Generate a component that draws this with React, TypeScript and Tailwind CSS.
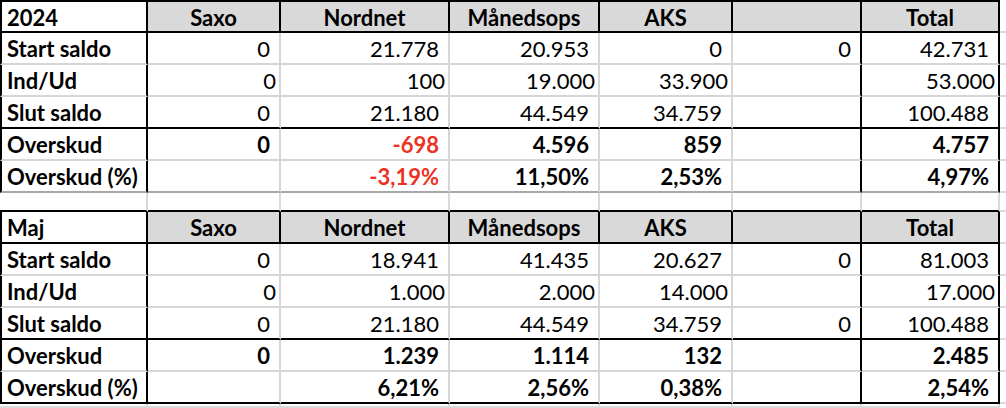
import React from "react";

type Row = {
  label: string;
  values: string[];
  bold?: boolean;
  tight?: boolean;
  red?: number[];
};

type Block = {
  title: string;
  last: "grey" | "black";
  rows: Row[];
};

const heads = ["Saxo", "Nordnet", "Månedsops", "AKS", "", "Total"];

const blocks: Block[] = [
  {
    title: "2024",
    last: "grey",
    rows: [
      { label: "Start saldo", values: ["0", "21.778", "20.953", "0", "0", "42.731"] },
      { label: "Ind/Ud", values: ["0", "100", "19.000", "33.900", "", "53.000"], tight: true },
      { label: "Slut saldo", values: ["0", "21.180", "44.549", "34.759", "", "100.488"] },
      { label: "Overskud", values: ["0", "-698", "4.596", "859", "", "4.757"], bold: true, red: [1] },
      { label: "Overskud (%)", values: ["", "-3,19%", "11,50%", "2,53%", "", "4,97%"], bold: true, red: [1] },
    ],
  },
  {
    title: "Maj",
    last: "black",
    rows: [
      { label: "Start saldo", values: ["0", "18.941", "41.435", "20.627", "0", "81.003"] },
      { label: "Ind/Ud", values: ["0", "1.000", "2.000", "14.000", "", "17.000"], tight: true },
      { label: "Slut saldo", values: ["0", "21.180", "44.549", "34.759", "0", "100.488"] },
      { label: "Overskud", values: ["0", "1.239", "1.114", "132", "", "2.485"], bold: true },
      { label: "Overskud (%)", values: ["", "6,21%", "2,56%", "0,38%", "", "2,54%"], bold: true },
    ],
  },
];

// columns where the vertical line is black in the data rows
const blackRight = [0, 5, 6];

function HeaderRow({ title, first }: { title: string; first: boolean }) {
  const h = first ? "h-[33px] border-t-2" : "h-[32px]";
  return (
    <>
      <div className={`${h} border-l-2 border-r-2 border-b-2 border-black bg-white flex items-center pl-[5px] pt-[2px] font-bold`}>
        {title}
      </div>
      {heads.map((t, i) => (
        <div
          key={i}
          className={`${h} border-r-2 border-b-2 border-black bg-[#d9d9d9] flex items-center justify-center pt-[2px] font-bold`}
        >
          {t}
        </div>
      ))}
      <div className={`${first ? "h-[33px]" : "h-[32px]"} border-b-2 border-[#dadada]`} />
    </>
  );
}

function DataRow({ row, bottom }: { row: Row; bottom: string }) {
  return (
    <>
      <div className={`h-[32px] border-l-2 border-r-2 border-black ${bottom} border-b-2 flex items-center pl-[5px] pt-[2px] font-bold`}>
        {row.label}
      </div>
      {row.values.map((v, i) => {
        const col = i + 1;
        const right = blackRight.includes(col) ? "border-r-black" : "border-r-[#d6d6d6]";
        const red = row.red?.includes(i) ? "text-[#eb3323]" : "";
        return (
          <div
            key={i}
            className={`h-[32px] border-r-2 border-b-2 ${right} ${bottom} flex items-center justify-end pt-[2px] ${row.tight ? "pr-[3px]" : "pr-[9px]"} ${row.bold ? "font-bold" : ""} ${red}`}
          >
            {v}
          </div>
        );
      })}
      <div className="h-[32px] border-b-2 border-[#dadada]" />
    </>
  );
}

function Filler({ h }: { h: string }) {
  return (
    <>
      {Array.from({ length: 7 }, (_, i) => (
        <div key={i} className={`${h} border-r-2 border-b-2 border-[#dadada]`} />
      ))}
      <div className={h} />
    </>
  );
}

export default function App() {
  return (
    <div
      className="w-[1006px] h-[408px] overflow-hidden bg-white text-black text-[22px] leading-none"
      style={{ fontFamily: "Lato, 'Open Sans', sans-serif" }}
    >
      <div className="grid grid-cols-[148px_133px_169px_150px_133px_129px_138px_6px]">
        {blocks.map((b, bi) => (
          <React.Fragment key={b.title}>
            {bi > 0 && (
              <>
                {Array.from({ length: 7 }, (_, i) => (
                  <div key={i} className="h-[19px] border-r-2 border-b-2 border-r-[#dadada] border-b-black" />
                ))}
                <div className="h-[19px] border-b-2 border-[#dadada]" />
              </>
            )}
            <HeaderRow title={b.title} first={bi === 0} />
            {b.rows.map((r, ri) => {
              let bottom = "border-b-[#d6d6d6]";
              if (ri === 2) bottom = "border-b-black";
              if (ri === b.rows.length - 1) bottom = b.last === "black" ? "border-b-black" : "border-b-[#a8a8a8]";
              return <DataRow key={ri} row={r} bottom={bottom} />;
            })}
          </React.Fragment>
        ))}
        <Filler h="h-[4px]" />
      </div>
    </div>
  );
}
